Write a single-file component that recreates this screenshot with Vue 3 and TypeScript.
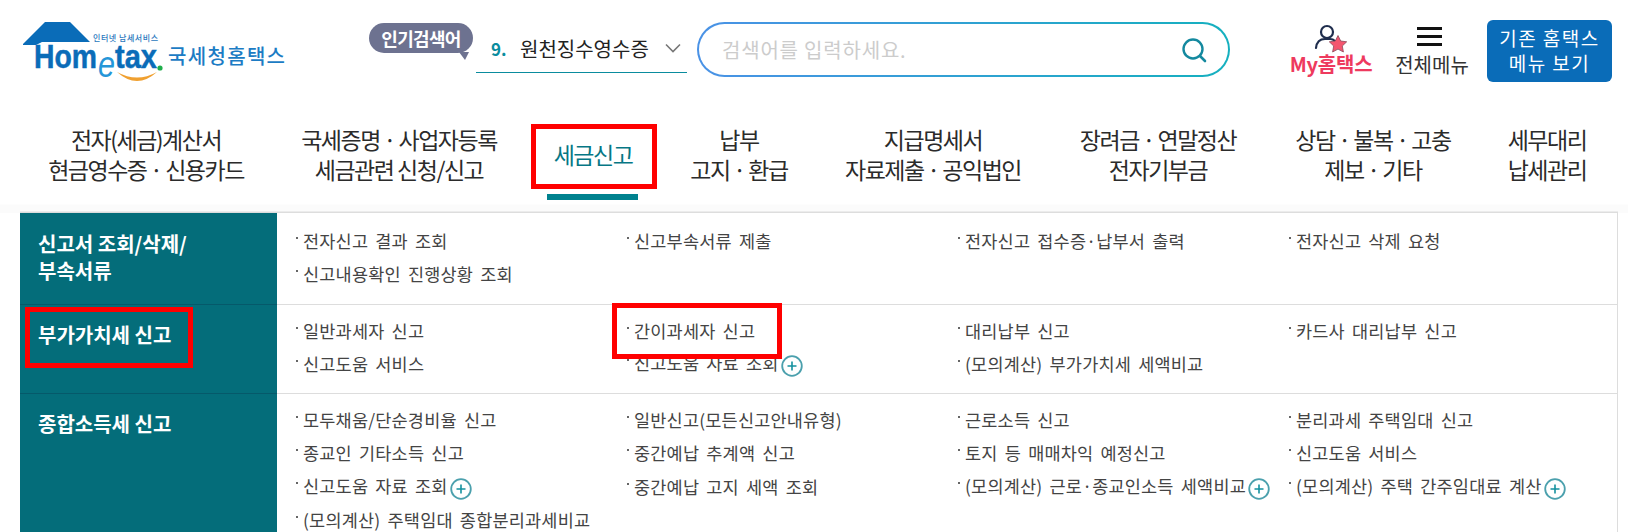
<script setup lang="ts">
interface MenuItem {
  text: string;
  plus?: boolean;
}

interface MenuRow {
  title: string[];
  items: MenuItem[];
}

const navItems: string[][] = [
  ['전자(세금)계산서', '현금영수증 · 신용카드'],
  ['국세증명 · 사업자등록', '세금관련 신청/신고'],
  ['세금신고'],
  ['납부', '고지 · 환급'],
  ['지급명세서', '자료제출 · 공익법인'],
  ['장려금 · 연말정산', '전자기부금'],
  ['상담 · 불복 · 고충', '제보 · 기타'],
  ['세무대리', '납세관리'],
];

const rows: MenuRow[] = [
  {
    title: ['신고서 조회/삭제/', '부속서류'],
    items: [
      { text: '전자신고 결과 조회' },
      { text: '신고부속서류 제출' },
      { text: '전자신고 접수증·납부서 출력' },
      { text: '전자신고 삭제 요청' },
      { text: '신고내용확인 진행상황 조회' },
    ],
  },
  {
    title: ['부가가치세 신고'],
    items: [
      { text: '일반과세자 신고' },
      { text: '간이과세자 신고' },
      { text: '대리납부 신고' },
      { text: '카드사 대리납부 신고' },
      { text: '신고도움 서비스' },
      { text: '신고도움 자료 조회', plus: true },
      { text: '(모의계산) 부가가치세 세액비교' },
    ],
  },
  {
    title: ['종합소득세 신고'],
    items: [
      { text: '모두채움/단순경비율 신고' },
      { text: '일반신고(모든신고안내유형)' },
      { text: '근로소득 신고' },
      { text: '분리과세 주택임대 신고' },
      { text: '종교인 기타소득 신고' },
      { text: '중간예납 추계액 신고' },
      { text: '토지 등 매매차익 예정신고' },
      { text: '신고도움 서비스' },
      { text: '신고도움 자료 조회', plus: true },
      { text: '중간예납 고지 세액 조회' },
      { text: '(모의계산) 근로·종교인소득 세액비교', plus: true },
      { text: '(모의계산) 주택 간주임대료 계산', plus: true },
      { text: '(모의계산) 주택임대 종합분리과세비교' },
    ],
  },
];
</script>

<template>
  <div class="page">
    <header class="top">
      <svg class="logo" width="290" height="90" viewBox="0 0 290 90">
        <path d="M23 44 L45 22 H70 L90 42 H42 L36 45 H23 Z" fill="#0a6cb8" />
        <text x="93" y="41" class="logo-sub" textLength="65">인터넷 납세서비스</text>
        <text x="34" y="68" class="logo-main" textLength="63" lengthAdjust="spacingAndGlyphs">Hom</text>
        <text x="98" y="77" class="logo-e" textLength="17" lengthAdjust="spacingAndGlyphs">e</text>
        <text x="115" y="68" class="logo-main" textLength="42" lengthAdjust="spacingAndGlyphs">tax</text>
        <circle cx="160" cy="68" r="2.6" fill="#1fae4b" />
        <path d="M117 72 Q137 90 157 72 Q137 83 117 72 Z" fill="#f0a030" />
        <text x="168" y="64" class="logo-name" textLength="117">국세청홈택스</text>
      </svg>

      <div class="hot-badge">인기검색어</div>

      <div class="hot-select">
        <b>9.</b>
        <span class="hot-word">원천징수영수증</span>
        <svg width="16" height="10" viewBox="0 0 16 10">
          <path d="M1 1.5 L8 8.5 L15 1.5" fill="none" stroke="#777" stroke-width="1.6" />
        </svg>
      </div>

      <div class="search">
        <span class="placeholder">검색어를 입력하세요.</span>
        <svg width="28" height="28" viewBox="0 0 28 28">
          <circle cx="13" cy="13" r="9.5" fill="none" stroke="#14899f" stroke-width="2.4" />
          <path d="M20 20 L25 25" stroke="#14899f" stroke-width="2.6" stroke-linecap="round" />
        </svg>
      </div>

      <div class="my">
        <svg width="34" height="29" viewBox="0 0 34 29">
          <circle cx="13" cy="8" r="6" fill="none" stroke="#1f2d4d" stroke-width="2.2" />
          <path d="M2 24 Q3 15 11 15 H16 Q19 15 21 17" fill="none" stroke="#1f2d4d" stroke-width="2.2" stroke-linecap="round" />
          <path d="M24 11.5 L26.7 17 L32.7 17.8 L28.3 22 L29.4 28 L24 25.1 L18.6 28 L19.7 22 L15.3 17.8 L21.3 17 Z" fill="#f4566f" stroke="#8a4a5a" stroke-width="0.8" />
        </svg>
        <span>My홈택스</span>
      </div>

      <div class="all-menu">
        <div class="burger"><i></i><i></i><i></i></div>
        <span>전체메뉴</span>
      </div>

      <div class="old-btn">기존 홈택스<br />메뉴 보기</div>
    </header>

    <nav class="gnb">
      <div v-for="(lines, i) in navItems" :key="i" class="gnb-item" :class="{ on: lines.length === 1 }">
        <div v-for="line in lines" :key="line">{{ line }}</div>
      </div>
    </nav>

    <section class="panel">
      <div v-for="row in rows" :key="row.title[0]" class="row">
        <div class="side">
          <div v-for="line in row.title" :key="line">{{ line }}</div>
        </div>
        <ul class="list">
          <li v-for="item in row.items" :key="item.text">{{ item.text }}<svg v-if="item.plus" class="plus" width="22" height="22" viewBox="0 0 22 22">
              <circle cx="11" cy="11" r="9.8" fill="#fff" stroke="#4ba0ad" stroke-width="1.8" />
              <path d="M11 6.5 V15.5 M6.5 11 H15.5" stroke="#14919f" stroke-width="1.6" />
            </svg></li>
        </ul>
      </div>
    </section>

    <div class="mark mark-tab"></div>
    <div class="mark mark-side"></div>
    <div class="mark mark-item"></div>
  </div>
</template>

<style>
body {
  margin: 0;
  background: #fff;
}
</style>

<style scoped>
.page {
  position: relative;
  width: 1628px;
  height: 532px;
  overflow: hidden;
  background: #fff;
  font-family: "Noto Sans CJK KR", "Noto Sans", sans-serif;
  color: #333;
}

.top {
  display: flex;
  align-items: flex-start;
  height: 100px;
}

.logo {
  flex: none;
}

.logo-sub {
  font-size: 8px;
  font-weight: 500;
  fill: #2a78bd;
}

.logo-main {
  font-family: "Liberation Sans", sans-serif;
  font-size: 34px;
  font-weight: 700;
  fill: #0a6cb8;
  stroke: #0a6cb8;
  stroke-width: 0.5px;
}

.logo-e {
  font-family: "Liberation Sans", sans-serif;
  font-size: 36px;
  font-style: italic;
  fill: #2596d8;
}

.logo-name {
  font-size: 20px;
  font-weight: 500;
  fill: #1c7cc4;
}

.hot-badge {
  position: relative;
  margin: 23px 0 0 79px;
  width: 104px;
  height: 30px;
  border-radius: 15px;
  background: #6d7290;
  color: #fff;
  font-size: 18px;
  font-weight: 700;
  line-height: 30px;
  text-align: center;
  letter-spacing: -0.7px;
  white-space: nowrap;
}

.hot-badge::after {
  content: "";
  position: absolute;
  right: 4px;
  bottom: -7px;
  width: 10px;
  height: 8px;
  background: #6d7290;
  clip-path: polygon(0 0, 100% 0, 60% 100%);
}

.hot-select {
  display: flex;
  align-items: center;
  box-sizing: border-box;
  width: 211px;
  height: 52px;
  margin: 21px 0 0 3px;
  padding: 3px 6px 0 15px;
  border-bottom: 1.5px solid #0a8c9e;
  font-size: 20px;
  color: #222;
}

.hot-select b {
  width: 29px;
  color: #0a8c9e;
  font-size: 17px;
}

.hot-word {
  flex: 1;
}

.search {
  display: flex;
  align-items: center;
  justify-content: space-between;
  box-sizing: border-box;
  width: 533px;
  height: 55px;
  margin: 22px 0 0 10px;
  padding: 0 20px 0 23px;
  border: 2.5px solid transparent;
  border-radius: 28px;
  background: linear-gradient(#fff, #fff) padding-box,
    linear-gradient(90deg, #4a92e6, #15b0bf) border-box;
}

.placeholder {
  font-size: 20px;
  color: #ccc;
  letter-spacing: 0.8px;
}

.my,
.all-menu {
  display: flex;
  flex-direction: column;
  align-items: center;
  font-size: 20px;
  white-space: nowrap;
}

.my {
  width: 84px;
  margin: 24px 0 0 59px;
  color: #ee3a5e;
  font-weight: 700;
}

.my span {
  margin-top: -3px;
  line-height: 28px;
  letter-spacing: -0.2px;
}

.all-menu {
  width: 74px;
  margin: 27px 0 0 22px;
  color: #333;
}

.burger {
  display: flex;
  flex-direction: column;
  gap: 5px;
  width: 25px;
  margin: 0 5px 5px 0;
}

.burger i {
  display: block;
  height: 3px;
  background: #111;
}

.all-menu span {
  line-height: 28px;
}

.old-btn {
  flex: none;
  width: 125px;
  height: 62px;
  margin: 20px 0 0 18px;
  padding-top: 5px;
  box-sizing: border-box;
  border-radius: 6px;
  background: #0a6cb8;
  color: #fff;
  font-size: 19px;
  line-height: 25px;
  letter-spacing: 1.5px;
  text-align: center;
  white-space: nowrap;
}

.gnb {
  display: grid;
  grid-template-columns: 252px 254px 134px 158px 230px 220px 210px 138px;
  align-items: start;
  height: 113px;
  padding: 24px 0 0 20px;
  box-sizing: border-box;
  background: linear-gradient(#fff 104px, #fbfbfb 105px);
}

.gnb-item {
  font-size: 23px;
  line-height: 30px;
  letter-spacing: -1.5px;
  text-align: center;
  color: #2b2b2b;
  white-space: nowrap;
}

.gnb-item.on {
  position: relative;
  height: 60px;
  line-height: 60px;
  color: #067785;
}

.gnb-item.on::after {
  content: "";
  position: absolute;
  left: 21px;
  right: 22px;
  top: 70px;
  height: 6px;
  background: #00828f;
}

.panel {
  margin-left: 20px;
  width: 1598px;
  height: 319px;
  box-sizing: border-box;
  border-right: 1.5px solid #ddd;
  box-shadow: 0 -1.5px 0 #ddd;
}

.row {
  display: grid;
  grid-template-columns: 257px 1fr;
  height: 89px;
  border-bottom: 1px solid #ddd;
  box-sizing: border-box;
}

.row:nth-child(1) {
  height: 92px;
}

.row:last-child {
  height: 138px;
  border-bottom: 0;
}

.side {
  padding: 16px 0 0 18px;
  margin-bottom: -1px;
  border-bottom: 1px solid #05596a;
  background: #046d7a;
  color: #fff;
  font-size: 20px;
  font-weight: 700;
  line-height: 27px;
}

.row:nth-child(1) .side {
  padding-top: 17px;
}

.list {
  display: grid;
  grid-template-columns: repeat(4, 331px);
  grid-auto-rows: 33px;
  align-items: center;
  margin: 0;
  padding: 9px 0 0 19px;
  list-style: none;
}

.row:nth-child(1) .list {
  padding-top: 11px;
}

.row:last-child .list {
  grid-template-rows: 33px 33px 34px 33px;
}

.list li {
  position: relative;
  padding-left: 7px;
  font-size: 17.5px;
  letter-spacing: 0.2px;
  word-spacing: 3px;
  color: #444;
  white-space: nowrap;
}

.list li::before {
  content: "";
  position: absolute;
  left: 0;
  top: 9px;
  width: 2px;
  height: 2px;
  background: #666;
}

.plus {
  vertical-align: -7px;
  margin-left: 2px;
}

.mark {
  position: absolute;
  box-sizing: border-box;
  border: 5px solid #f00;
}

.mark-tab {
  left: 531px;
  top: 124px;
  width: 126px;
  height: 65px;
}

.mark-side {
  left: 25px;
  top: 307px;
  width: 168px;
  height: 61px;
}

.mark-item {
  left: 612px;
  top: 303px;
  width: 170px;
  height: 56px;
}
</style>
